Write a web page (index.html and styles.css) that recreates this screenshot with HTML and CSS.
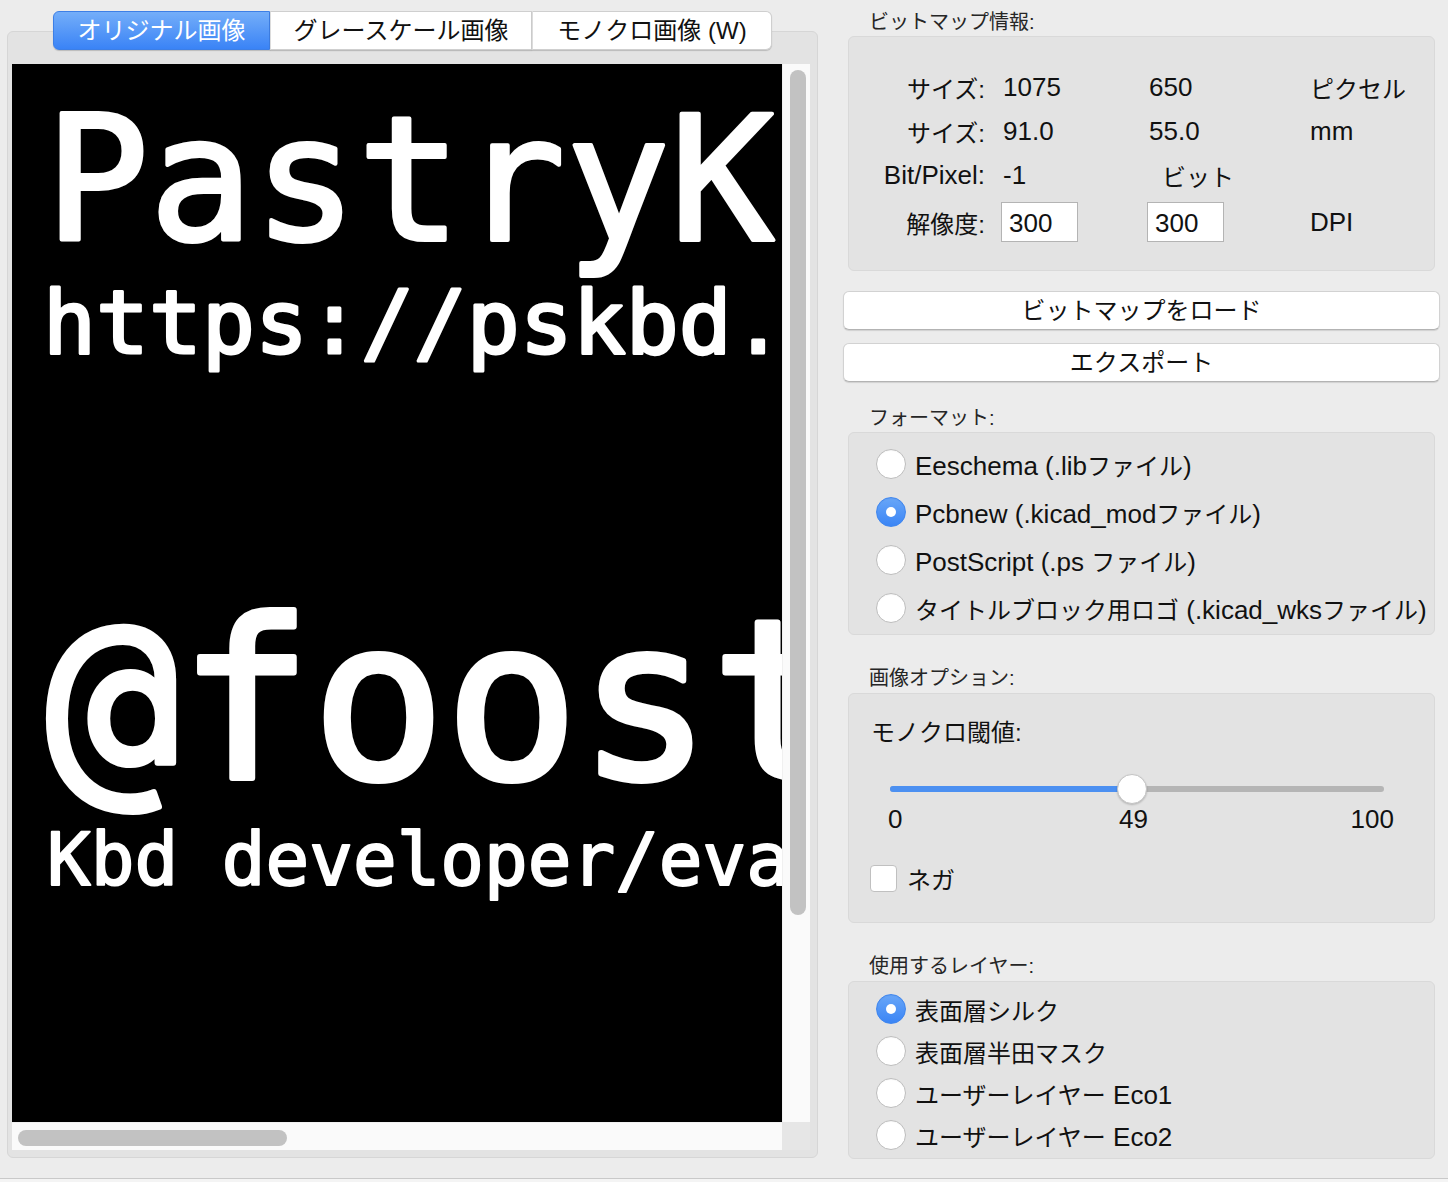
FILE: index.html
```html
<!DOCTYPE html>
<html lang="ja">
<head>
<meta charset="utf-8">
<title>Bitmap to Component Converter</title>
<link rel="stylesheet" href="styles.css">
</head>
<body>
<div class="window">
  <div class="left">
    <div class="tabs">
      <div class="tab tab-orig active">オリジナル画像</div>
      <div class="tab tab-gray">グレースケール画像</div>
      <div class="tab tab-mono">モノクロ画像 (W)</div>
    </div>
    <div class="panel">
      <div class="scroller">
        <div class="canvas">
          <svg class="bitmap" width="770" height="1058" viewBox="0 0 770 1058">
            <rect width="770" height="1058" fill="#000"/>
            <g class="bm-text">
              <text x="33" y="176" class="l1">PastryKbd</text>
              <text x="31" y="289" class="l2">https://pskbd.booth.pm</text>
              <text x="34" y="714" class="l3">@foostan</text>
              <text x="35" y="821" class="l4">Kbd developer/evangelist</text>
            </g>
          </svg>
        </div>
        <div class="vscroll"><div class="vthumb"></div></div>
        <div class="hscroll"><div class="hthumb"></div></div>
        <div class="corner"></div>
      </div>
    </div>
  </div>

  <div class="right">
    <div class="section-label label-info">ビットマップ情報:</div>
    <div class="group info">
      <div class="info-grid">
        <span class="key ja">サイズ:</span><span class="val">1075</span><span class="val">650</span><span class="unit ja">ピクセル</span>
        <span class="key ja">サイズ:</span><span class="val">91.0</span><span class="val">55.0</span><span class="unit">mm</span>
        <span class="key">Bit/Pixel:</span><span class="val">-1</span><span class="val bits ja">ビット</span><span class="unit"></span>
        <span class="key ja">解像度:</span><span class="val"><span class="field">300</span></span><span class="val"><span class="field">300</span></span><span class="unit">DPI</span>
      </div>
    </div>

    <div class="btn btn-load">ビットマップをロード</div>
    <div class="btn btn-export">エクスポート</div>

    <div class="section-label label-format">フォーマット:</div>
    <div class="group format">
      <div class="radio-row fmt"><span class="radio"></span><span><span class="en">Eeschema (.lib</span>ファイル<span class="en">)</span></span></div>
      <div class="radio-row fmt"><span class="radio checked"></span><span><span class="en">Pcbnew (.kicad_mod</span>ファイル<span class="en">)</span></span></div>
      <div class="radio-row fmt"><span class="radio"></span><span><span class="en">PostScript (.ps </span>ファイル<span class="en">)</span></span></div>
      <div class="radio-row fmt"><span class="radio"></span><span>タイトルブロック用ロゴ<span class="en"> (.kicad_wks</span>ファイル<span class="en">)</span></span></div>
    </div>

    <div class="section-label label-opts">画像オプション:</div>
    <div class="group options">
      <div class="opt-title">モノクロ閾値:</div>
      <div class="slider">
        <div class="track"><div class="fill"></div></div>
        <div class="thumb"></div>
      </div>
      <div class="slider-labels">
        <span class="min">0</span><span class="cur">49</span><span class="max">100</span>
      </div>
      <div class="check-row"><span class="checkbox"></span><span>ネガ</span></div>
    </div>

    <div class="section-label label-layers">使用するレイヤー:</div>
    <div class="group layers">
      <div class="radio-row lay"><span class="radio checked"></span><span>表面層シルク</span></div>
      <div class="radio-row lay"><span class="radio"></span><span>表面層半田マスク</span></div>
      <div class="radio-row lay"><span class="radio"></span><span>ユーザーレイヤー<span class="en"> Eco1</span></span></div>
      <div class="radio-row lay"><span class="radio"></span><span>ユーザーレイヤー<span class="en"> Eco2</span></span></div>
    </div>
  </div>
</div>
</body>
</html>
```

FILE: styles.css
```css
html {
  background: #f4f4f4;
}
body {
  margin: 0;
  font-family: "Liberation Sans", "Noto Sans CJK JP", sans-serif;
  color: #111;
}
.window {
  display: flex;
  height: 1178px;
  background: #ececec;
  border-bottom: 1px solid #c9c9c9;
  overflow: hidden;
}
.en {
  font-size: 26px;
}

/* ---------- left: tab view ---------- */
.left {
  width: 811px;
  margin-left: 7px;
  padding-top: 11px;
}
.tabs {
  position: relative;
  z-index: 1;
  display: flex;
  justify-content: center;
  height: 39px;
  margin-bottom: -19px;
}
.tab {
  box-sizing: border-box;
  height: 39px;
  line-height: 37px;
  font-size: 24px;
  text-align: center;
  background: #fff;
  border: 1px solid #cfcfcf;
  border-left: 1px solid #dcdcdc;
  box-shadow: 0 1px 1px rgba(0,0,0,0.18);
  white-space: nowrap;
}
.tab-orig {
  width: 217px;
  border-radius: 6px 0 0 6px;
  border-left: 1px solid #cfcfcf;
}
.tab-gray { width: 262px; }
.tab-mono {
  width: 240px;
  border-radius: 0 6px 6px 0;
}
.tab.active {
  color: #fff;
  background: linear-gradient(#74aef9, #3a83f6);
  border-color: #3d7fe6;
}
.panel {
  box-sizing: border-box;
  height: 1127px;
  padding: 32px 7px 7px 4px;
  background: #e3e3e3;
  border: 1px solid #d6d6d6;
  border-radius: 6px;
}
.scroller {
  display: grid;
  grid-template-columns: 770px 28px;
  grid-template-rows: 1058px 28px;
}
.canvas {
  width: 770px;
  height: 1058px;
  overflow: hidden;
  background: #000;
}
.bitmap {
  display: block;
}
.bm-text text {
  font-family: "DejaVu Sans Mono", monospace;
  font-weight: normal;
  fill: #fff;
  stroke: #fff;
  stroke-linejoin: round;
}
.bm-text .l1 { font-size: 173px; stroke-width: 4px; }
.bm-text .l2 { font-size: 88px; stroke-width: 3px; }
.bm-text .l3 { font-size: 221px; stroke-width: 6px; }
.bm-text .l4 { font-size: 72.6px; stroke-width: 2px; }

.vscroll {
  background: #fafafa;
  border-left: 1px solid #f0f0f0;
}
.vthumb {
  width: 16px;
  height: 845px;
  margin: 6px 0 0 7px;
  border-radius: 8px;
  background: #c2c2c2;
}
.hscroll {
  background: #fafafa;
  border-top: 1px solid #f0f0f0;
}
.hthumb {
  width: 269px;
  height: 16px;
  margin: 7px 0 0 6px;
  border-radius: 8px;
  background: #c2c2c2;
}
.corner {
  background: #e6e6e6;
}

/* ---------- right column ---------- */
.right {
  width: 597px;
  margin-left: 25px;
  padding-top: 10px;
}
.section-label {
  height: 24px;
  line-height: 24px;
  padding-left: 26px;
  font-size: 20px;
  color: #262626;
}
.label-format { margin-top: 24px; }
.label-opts { margin-top: 31px; }
.label-layers { margin-top: 31px; }

.group {
  box-sizing: border-box;
  margin: 2px 5px 0;
  background: #e3e3e3;
  border: 1px solid #d9d9d9;
  border-radius: 6px;
}
.info { height: 235px; }
.format { height: 203px; padding-top: 7px; }
.options { height: 230px; margin-top: 3px; }
.layers { height: 178px; margin-top: 3px; padding-top: 6px; }

.info-grid {
  display: grid;
  grid-template-columns: 152px 146px 162px 1fr;
  grid-template-rows: 44px 44px 44px 50px;
  align-items: center;
  padding-top: 28px;
  font-size: 26px;
}
.info-grid .ja {
  font-size: 24px;
}
.info-grid .key {
  text-align: right;
  padding-right: 16px;
}
.info-grid .val {
  padding-left: 2px;
}
.info-grid .unit {
  padding-left: 1px;
}
.info-grid .bits { padding-left: 15px; }
.info-grid .val .field {
  display: block;
  box-sizing: border-box;
  width: 77px;
  height: 40px;
  line-height: 40px;
  margin-left: -2px;
  padding-left: 7px;
  background: #fff;
  border: 1px solid #b4b4b4;
}

.btn {
  box-sizing: border-box;
  height: 39px;
  line-height: 37px;
  margin-top: 20px;
  font-size: 24px;
  text-align: center;
  background: #fff;
  border: 1px solid #d2d2d2;
  border-bottom-color: #b3b3b3;
  border-radius: 6px;
  box-shadow: 0 1px 1px rgba(0,0,0,0.12);
}
.btn-export { margin-top: 13px; }

.radio-row {
  display: flex;
  align-items: center;
  gap: 9px;
  padding-left: 27px;
  font-size: 24px;
  white-space: nowrap;
}
.radio-row.fmt { height: 48px; }
.radio-row.lay { height: 42px; }
.radio {
  box-sizing: border-box;
  flex: none;
  width: 30px;
  height: 30px;
  border-radius: 50%;
  background: #fff;
  border: 1px solid #bdbdbd;
  box-shadow: inset 0 1px 1px rgba(0,0,0,0.04);
}
.radio.checked {
  display: flex;
  align-items: center;
  justify-content: center;
  border: 1px solid #3f86ef;
  background: linear-gradient(#68a6f8, #3b85f5);
}
.radio.checked::after {
  content: "";
  width: 10px;
  height: 10px;
  border-radius: 50%;
  background: #fff;
}

.opt-title {
  height: 30px;
  line-height: 30px;
  margin: 24px 0 0 22px;
  font-size: 24px;
}
.slider {
  position: relative;
  width: 494px;
  height: 30px;
  margin: 26px 0 0 41px;
}
.track {
  position: relative;
  top: 12px;
  height: 6px;
  border-radius: 3px;
  background: #b5b5b5;
  overflow: hidden;
}
.fill {
  width: 49%;
  height: 6px;
  background: #4c90f1;
}
.thumb {
  position: absolute;
  top: 0;
  left: calc(49% - 15px);
  box-sizing: border-box;
  width: 30px;
  height: 30px;
  border-radius: 50%;
  background: #fff;
  border: 1px solid #c4c4c4;
  box-shadow: 0 1px 2px rgba(0,0,0,0.2);
}
.slider-labels {
  display: grid;
  grid-template-columns: 215px 61px 1fr;
  width: 506px;
  height: 30px;
  line-height: 30px;
  margin-left: 39px;
  font-size: 26px;
}
.slider-labels .cur { text-align: center; }
.slider-labels .max { text-align: right; }
.check-row {
  display: flex;
  align-items: center;
  gap: 10px;
  height: 30px;
  margin: 29px 0 0 21px;
  font-size: 24px;
}
.checkbox {
  box-sizing: border-box;
  width: 27px;
  height: 27px;
  border-radius: 4px;
  background: #fff;
  border: 1px solid #c0c0c0;
}
```
